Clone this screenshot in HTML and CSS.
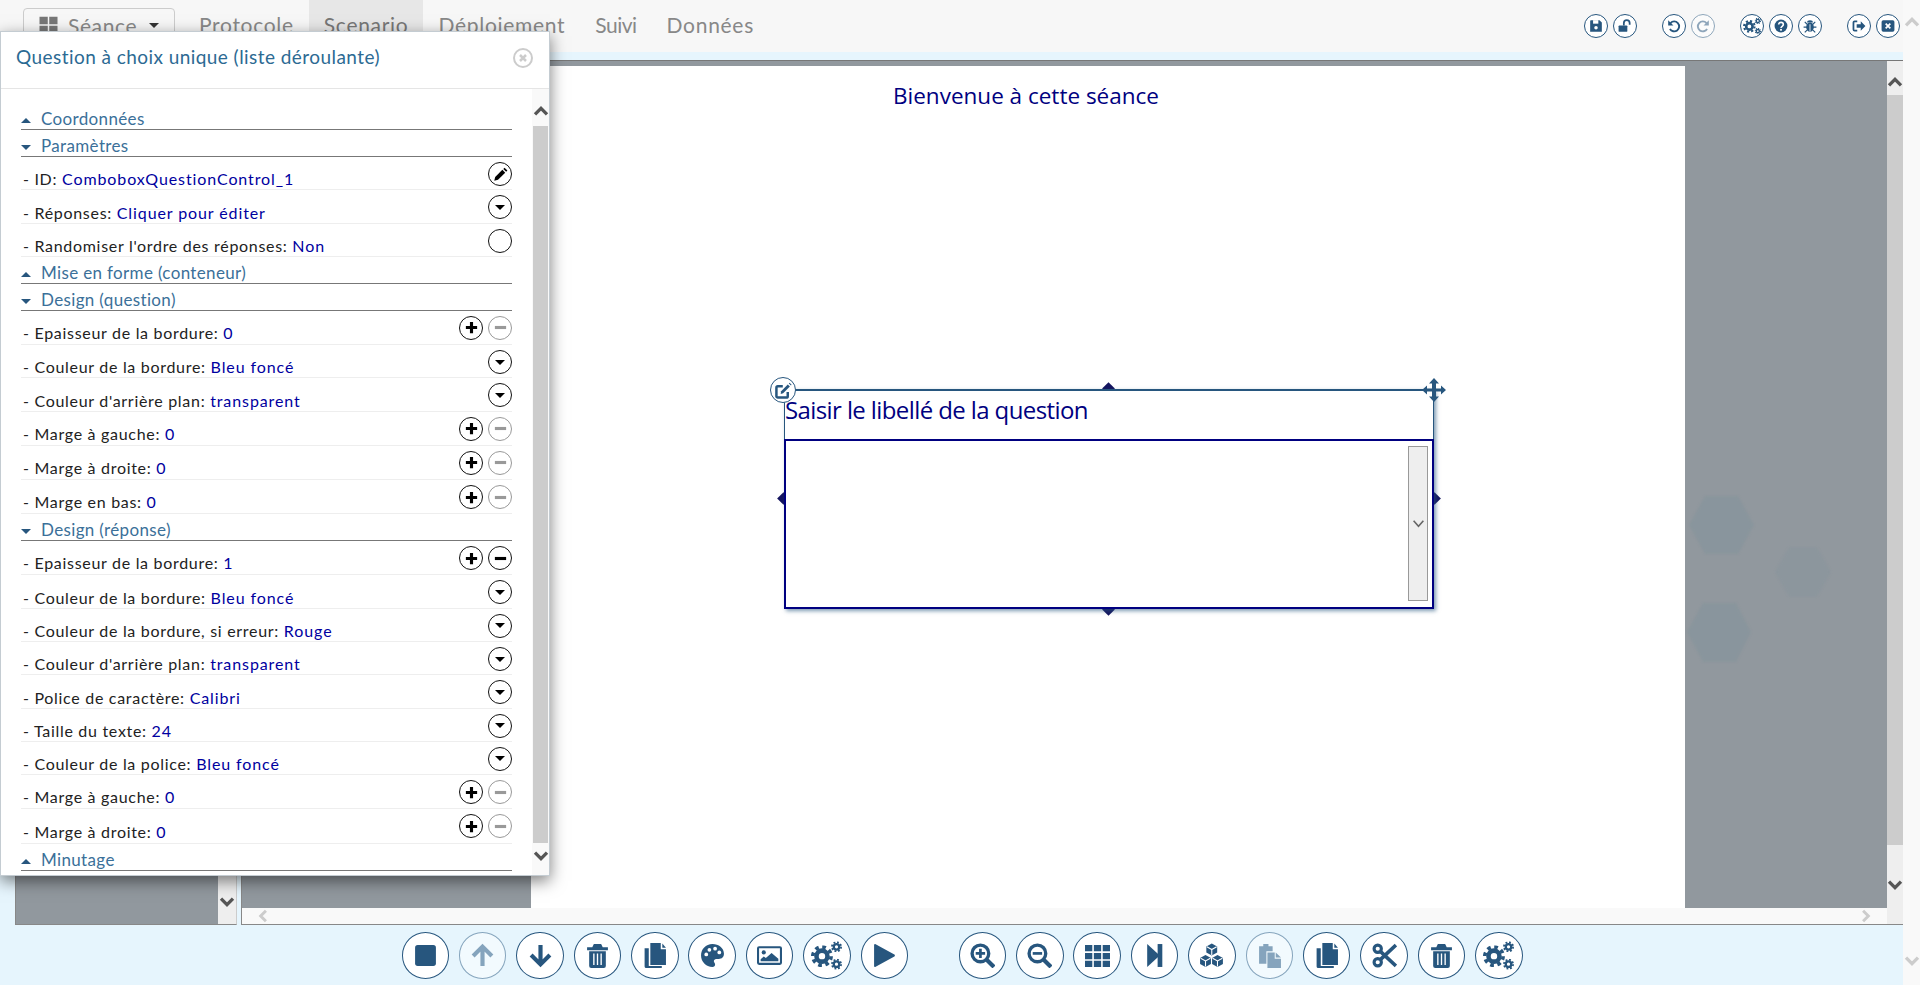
FILE: index.html
```html
<!DOCTYPE html>
<html lang="fr">
<head>
    <meta charset="UTF-8">
    <title>Scenario</title>
    <link rel="stylesheet" href="styles.css">
</head>
<body>
    <!-- icon set -->
    <svg class="icon-defs" xmlns="http://www.w3.org/2000/svg">
        <symbol id="gear" viewBox="0 0 24 24"><circle cx="12" cy="12" r="6" fill="none" stroke="currentColor" stroke-width="5"/><circle cx="12" cy="12" r="10" fill="none" stroke="currentColor" stroke-width="4" stroke-dasharray="4 3.85"/></symbol>
        <symbol id="i-cogs" viewBox="0 0 24 24"><use href="#gear" x="0" y="4" width="17" height="17"/><use href="#gear" x="15.500" y="1" width="8.500" height="8.500"/><use href="#gear" x="15.500" y="14.500" width="8.500" height="8.500"/></symbol>
        <symbol id="i-save" viewBox="0 0 24 24"><path d="M3 2h15l4 4v16H2V3z" fill="currentColor"/><rect x="7" y="2" width="9" height="6" fill="#fff"/><circle cx="12" cy="15" r="3" fill="#fff"/></symbol>
        <symbol id="i-unlock" viewBox="0 0 24 24"><rect x="1" y="11" width="15" height="11" rx="1.5" fill="currentColor"/><path d="M10 11V7a5 5 0 0 1 10 0v3" fill="none" stroke="currentColor" stroke-width="3"/></symbol>
        <symbol id="i-undo" viewBox="0 0 24 24"><path d="M6 7a8.5 8.5 0 1 1-1 10" fill="none" stroke="currentColor" stroke-width="3.2"/><path d="M2 2v9h9z" fill="currentColor"/></symbol>
        <symbol id="i-redo" viewBox="0 0 24 24"><path d="M18 7a8.5 8.5 0 1 0 1 10" fill="none" stroke="currentColor" stroke-width="3.2"/><path d="M22 2v9h-9z" fill="currentColor"/></symbol>
        <symbol id="i-help" viewBox="0 0 24 24"><circle cx="12" cy="12" r="11" fill="currentColor"/><path d="M8 9.5c0-5 8-5 8 0 0 3-4 3-4 6" fill="none" stroke="#fff" stroke-width="2.8"/><rect x="10.4" y="17" width="3.2" height="3" fill="#fff"/></symbol>
        <symbol id="i-bug" viewBox="0 0 24 24"><ellipse cx="12" cy="14" rx="6.5" ry="8" fill="currentColor"/><path d="M7 6a5 4 0 0 1 10 0z" fill="currentColor"/><path d="M12 8v14M3 5l4 4M21 5l-4 4M1 14h6M23 14h-6M3 23l4-4M21 23l-4-4" stroke="currentColor" stroke-width="2" fill="none"/><path d="M12 9v13" stroke="#fff" stroke-width="1.5"/></symbol>
        <symbol id="i-exit" viewBox="0 0 24 24"><path d="M9 4H4.500a2 2 0 0 0-2 2v12a2 2 0 0 0 2 2H9" fill="none" stroke="currentColor" stroke-width="3"/><path d="M8 9h7V4l8 8-8 8v-5H8z" fill="currentColor"/></symbol>
        <symbol id="i-closebox" viewBox="0 0 24 24"><rect x="1" y="2" width="22" height="20" rx="3" fill="currentColor"/><path d="M8 8l8 8M16 8l-8 8" stroke="#fff" stroke-width="3"/></symbol>
        <symbol id="i-grid4" viewBox="0 0 24 24"><path d="M0 1h11v10H0zM13 1h11v10H13zM0 13h11v10H0zM13 13h11v10H13z" fill="currentColor"/></symbol>
        <symbol id="i-stop" viewBox="0 0 24 24"><rect x="2" y="2" width="20" height="20" rx="2.500" fill="currentColor"/></symbol>
        <symbol id="i-up" viewBox="0 0 24 24"><path d="M12 22V4M3 12.500l9-9 9 9" fill="none" stroke="currentColor" stroke-width="4"/></symbol>
        <symbol id="i-down" viewBox="0 0 24 24"><path d="M12 2v18M3 11.500l9 9 9-9" fill="none" stroke="currentColor" stroke-width="4"/></symbol>
        <symbol id="i-trash" viewBox="0 0 24 24"><path d="M2 4h20v3H2zM7 4l1.500-3h7L17 4z" fill="currentColor"/><path d="M4 8h16v14a2 2 0 0 1-2 2H6a2 2 0 0 1-2-2z" fill="currentColor"/><path d="M8.500 10v11M12 10v11M15.500 10v11" stroke="#fff" stroke-width="1.300"/></symbol>
        <symbol id="i-files" viewBox="0 0 24 24"><path d="M8 0h10v6h5v15H8z" fill="currentColor"/><path d="M19.500 0.500L23 4.500h-3.500z" fill="currentColor"/><path d="M2.500 5H6.500v17H19v2H4a1.500 1.500 0 0 1-1.500-1.500z" fill="currentColor"/></symbol>
        <symbol id="i-palette" viewBox="0 0 24 24"><path d="M12 1C5.500 1 1 6 1 12s4.800 11 11 11c1.500 0 2.500-1 2.500-2.400 0-1.500-1.200-2-1.200-3.200 0-1.200 1-2.100 2.200-2.100H18c3 0 5-2 5-5C23 5 18 1 12 1z" fill="currentColor"/><circle cx="6" cy="11" r="1.800" fill="#fff"/><circle cx="9" cy="6.500" r="1.800" fill="#fff"/><circle cx="14.500" cy="5.500" r="1.800" fill="#fff"/><circle cx="18.500" cy="9" r="1.800" fill="#fff"/></symbol>
        <symbol id="i-image" viewBox="0 0 24 24"><rect x="1" y="4" width="22" height="16" rx="1" fill="none" stroke="currentColor" stroke-width="2"/><circle cx="6.500" cy="9" r="2" fill="currentColor"/><path d="M3.500 17.500v-2l3-2.500 2 1.500 5.500-5 6.500 5.500v2.500z" fill="currentColor"/></symbol>
        <symbol id="i-play" viewBox="0 0 24 24"><path d="M3 2l18 10-18 10z" fill="currentColor" stroke="currentColor" stroke-width="2" stroke-linejoin="round"/></symbol>
        <symbol id="i-zoomin" viewBox="0 0 24 24"><circle cx="10" cy="10" r="8" fill="none" stroke="currentColor" stroke-width="3.200"/><path d="M16 16l7 7" stroke="currentColor" stroke-width="4"/><path d="M10 5.500v9M5.500 10h9" stroke="currentColor" stroke-width="2.600"/></symbol>
        <symbol id="i-zoomout" viewBox="0 0 24 24"><circle cx="10" cy="10" r="8" fill="none" stroke="currentColor" stroke-width="3.200"/><path d="M16 16l7 7" stroke="currentColor" stroke-width="4"/><path d="M5.500 10h9" stroke="currentColor" stroke-width="2.600"/></symbol>
        <symbol id="i-th" viewBox="0 0 24 24"><path d="M0 2h7v6H0zM8.500 2h7v6h-7zM17 2h7v6h-7zM0 9.500h7v6H0zM8.500 9.500h7v6h-7zM17 9.500h7v6h-7zM0 17h7v6H0zM8.500 17h7v6h-7zM17 17h7v6h-7z" fill="currentColor"/></symbol>
        <symbol id="i-step" viewBox="0 0 24 24"><path d="M5 1l12 11L5 23z" fill="currentColor"/><rect x="15" y="1" width="4.500" height="22" fill="currentColor"/></symbol>
        <symbol id="cube" viewBox="0 0 24 24"><path d="M12 1l10 5.500v11L12 23 2 17.500v-11z" fill="currentColor"/><path d="M3 7l9 5 9-5M12 12v10" fill="none" stroke="#fff" stroke-width="2"/></symbol>
        <symbol id="i-cubes" viewBox="0 0 24 24"><use href="#cube" x="6" y="0" width="12.500" height="12.500"/><use href="#cube" x="0" y="11" width="12.500" height="12.500"/><use href="#cube" x="11.500" y="11" width="12.500" height="12.500"/></symbol>
        <symbol id="i-paste" viewBox="0 0 24 24"><path d="M2 3h4V1h5v2h4v5H9v12H2z" fill="currentColor"/><path d="M10 9h7v6h6v9H10z" fill="currentColor"/><path d="M18 9l5 5h-5z" fill="currentColor"/></symbol>
        <symbol id="i-scissors" viewBox="0 0 24 24"><circle cx="5.500" cy="5.500" r="3.500" fill="none" stroke="currentColor" stroke-width="3"/><circle cx="5.500" cy="18.500" r="3.500" fill="none" stroke="currentColor" stroke-width="3"/><path d="M8 8l15 14M8 16L23 2" stroke="currentColor" stroke-width="3.500"/></symbol>
        <symbol id="i-pencil" viewBox="0 0 24 24"><path d="M2 22l1.500-6L15 4.500l4.500 4.500L8 20.500z" fill="currentColor"/><path d="M16.500 3l2-2 4.500 4.500-2 2z" fill="currentColor"/></symbol>
        <symbol id="i-edit" viewBox="0 0 24 24"><path d="M18 14v6a2 2 0 0 1-2 2H4a2 2 0 0 1-2-2V8a2 2 0 0 1 2-2h7" fill="none" stroke="currentColor" stroke-width="3.500"/><path d="M8 17l.7-4L18 3.500l3 3L11.500 16z" fill="currentColor"/><path d="M19.500 2l1-1 3 3-1 1z" fill="currentColor"/></symbol>
        <symbol id="i-move" viewBox="0 0 24 24"><path d="M12 0l5 5.500h-3v5h5v-3l5 4.500-5 4.500v-3h-5v5h3L12 24l-5-5.500h3v-5H5v3L0 12l5-4.500v3h5v-5H7z" fill="currentColor"/></symbol>
        <symbol id="i-plus" viewBox="0 0 24 24"><path d="M12 3v18M3 12h18" stroke="currentColor" stroke-width="5"/></symbol>
        <symbol id="i-minus" viewBox="0 0 24 24"><path d="M3 12h18" stroke="currentColor" stroke-width="5"/></symbol>
        <symbol id="i-x" viewBox="0 0 24 24"><path d="M6 6l12 12M18 6L6 18" stroke="currentColor" stroke-width="5"/></symbol>
        <symbol id="chev-up" viewBox="0 0 24 24"><path d="M3 17l9-9 9 9" fill="none" stroke="currentColor" stroke-width="5"/></symbol>
        <symbol id="chev-down" viewBox="0 0 24 24"><path d="M3 7l9 9 9-9" fill="none" stroke="currentColor" stroke-width="5"/></symbol>
        <symbol id="chev-thin" viewBox="0 0 24 24"><path d="M3 7l9 10 9-10" fill="none" stroke="currentColor" stroke-width="3"/></symbol>
        <symbol id="chev-left" viewBox="0 0 24 24"><path d="M17 3l-9 9 9 9" fill="none" stroke="currentColor" stroke-width="5"/></symbol>
        <symbol id="chev-right" viewBox="0 0 24 24"><path d="M7 3l9 9-9 9" fill="none" stroke="currentColor" stroke-width="5"/></symbol>
    </svg>

    <div class="app">
        <div class="main">
            <nav class="navbar">
                <div class="session-btn">
                    <svg class="session-icon"><use href="#i-grid4"/></svg>
                    <span>Séance</span>
                    <i class="caret caret-down"></i>
                </div>
                <a class="tab">Protocole</a>
                <a class="tab tab-active">Scenario</a>
                <a class="tab">Déploiement</a>
                <a class="tab tab-tight">Suivi</a>
                <a class="tab">Données</a>
                <div class="nav-tools">
                    <div class="nav-group">
                        <span class="nav-btn"><svg><use href="#i-save"/></svg></span>
                        <span class="nav-btn"><svg><use href="#i-unlock"/></svg></span>
                    </div>
                    <div class="nav-group">
                        <span class="nav-btn"><svg><use href="#i-undo"/></svg></span>
                        <span class="nav-btn off"><svg><use href="#i-redo"/></svg></span>
                    </div>
                    <div class="nav-group">
                        <span class="nav-btn nav-btn-lg"><svg><use href="#i-cogs"/></svg></span>
                        <span class="nav-btn"><svg><use href="#i-help"/></svg></span>
                        <span class="nav-btn"><svg><use href="#i-bug"/></svg></span>
                    </div>
                    <div class="nav-group">
                        <span class="nav-btn"><svg><use href="#i-exit"/></svg></span>
                        <span class="nav-btn"><svg><use href="#i-closebox"/></svg></span>
                    </div>
                </div>
            </nav>
            <div class="strip"></div>

            <div class="workspace">
                <div class="side-panel">
                    <div class="side-fill"></div>
                    <div class="side-scroll"><svg class="chev chev-dark"><use href="#chev-down"/></svg></div>
                </div>
                <div class="view">
                    <div class="view-top">
                        <div class="stage">
                            <div class="sheet">
                                <h1 class="welcome">Bienvenue à cette séance</h1>
                                <div class="question">
                                    <div class="question-label">Saisir le libellé de la question</div>
                                    <div class="question-combo">
                                        <div class="combo-arrow"><svg class="chev-small"><use href="#chev-thin"/></svg></div>
                                    </div>
                                    <i class="handle handle-top"></i>
                                    <i class="handle handle-bottom"></i>
                                    <i class="handle handle-left"></i>
                                    <i class="handle handle-right"></i>
                                    <span class="edit-btn"><svg><use href="#i-edit"/></svg></span>
                                    <svg class="move-btn"><use href="#i-move"/></svg>
                                </div>
                            </div>
                            <svg class="hexes" viewBox="0 0 202 847">
                                <polygon points="4,464 20,435 53,435 69,464 53,493 20,493"/>
                                <polygon points="90,511 104,486 132,486 146,511 132,536 104,536" class="hex-faint"/>
                                <polygon points="2,571 18,542 51,542 66,571 51,601 18,601"/>
                            </svg>
                        </div>
                        <div class="v-scroll">
                            <svg class="chev chev-dark"><use href="#chev-up"/></svg>
                            <div class="v-thumb"></div>
                            <svg class="chev chev-dark"><use href="#chev-down"/></svg>
                        </div>
                    </div>
                    <div class="h-scroll">
                        <div class="h-track">
                            <svg class="chev chev-light"><use href="#chev-left"/></svg>
                            <svg class="chev chev-light"><use href="#chev-right"/></svg>
                        </div>
                        <div class="h-corner"></div>
                    </div>
                </div>
            </div>

            <div class="toolbar">
                <div class="tool-group">
                    <span class="tool"><svg><use href="#i-stop"/></svg></span>
                    <span class="tool off"><svg><use href="#i-up"/></svg></span>
                    <span class="tool"><svg><use href="#i-down"/></svg></span>
                    <span class="tool"><svg><use href="#i-trash"/></svg></span>
                    <span class="tool"><svg><use href="#i-files"/></svg></span>
                    <span class="tool"><svg><use href="#i-palette"/></svg></span>
                    <span class="tool"><svg><use href="#i-image"/></svg></span>
                    <span class="tool tool-lg"><svg><use href="#i-cogs"/></svg></span>
                    <span class="tool"><svg><use href="#i-play"/></svg></span>
                </div>
                <div class="tool-group">
                    <span class="tool"><svg><use href="#i-zoomin"/></svg></span>
                    <span class="tool"><svg><use href="#i-zoomout"/></svg></span>
                    <span class="tool"><svg><use href="#i-th"/></svg></span>
                    <span class="tool"><svg><use href="#i-step"/></svg></span>
                    <span class="tool"><svg><use href="#i-cubes"/></svg></span>
                    <span class="tool off"><svg><use href="#i-paste"/></svg></span>
                    <span class="tool"><svg><use href="#i-files"/></svg></span>
                    <span class="tool"><svg><use href="#i-scissors"/></svg></span>
                    <span class="tool"><svg><use href="#i-trash"/></svg></span>
                    <span class="tool tool-lg"><svg><use href="#i-cogs"/></svg></span>
                </div>
            </div>
        </div>

        <div class="page-scroll">
            <svg class="chev chev-light"><use href="#chev-up"/></svg>
            <svg class="chev chev-light"><use href="#chev-down"/></svg>
        </div>
    </div>

    <!-- properties dialog -->
    <div class="dialog">
        <div class="dialog-head">
            <span class="dialog-title">Question à choix unique (liste déroulante)</span>
            <span class="dialog-close"><svg><use href="#i-x"/></svg></span>
        </div>
        <div class="dialog-body">
            <div class="props">
                <div class="section"><i class="caret caret-up"></i>Coordonnées</div>
                <div class="section"><i class="caret caret-down"></i>Paramètres</div>
                <div class="row"><span>- ID: <em>ComboboxQuestionControl_1</em></span><span class="row-btns"><span class="rbtn"><svg><use href="#i-pencil"/></svg></span></span></div>
                <div class="row"><span>- Réponses: <em>Cliquer pour éditer</em></span><span class="row-btns"><span class="rbtn"><i class="caret caret-down"></i></span></span></div>
                <div class="row"><span>- Randomiser l'ordre des réponses: <em>Non</em></span><span class="row-btns"><span class="rbtn"></span></span></div>
                <div class="section"><i class="caret caret-up"></i>Mise en forme (conteneur)</div>
                <div class="section"><i class="caret caret-down"></i>Design (question)</div>
                <div class="row row-step"><span>- Epaisseur de la bordure: <em>0</em></span><span class="row-btns"><span class="rbtn"><svg><use href="#i-plus"/></svg></span><span class="rbtn off-grey"><svg><use href="#i-minus"/></svg></span></span></div>
                <div class="row"><span>- Couleur de la bordure: <em>Bleu foncé</em></span><span class="row-btns"><span class="rbtn"><i class="caret caret-down"></i></span></span></div>
                <div class="row"><span>- Couleur d'arrière plan: <em>transparent</em></span><span class="row-btns"><span class="rbtn"><i class="caret caret-down"></i></span></span></div>
                <div class="row row-step"><span>- Marge à gauche: <em>0</em></span><span class="row-btns"><span class="rbtn"><svg><use href="#i-plus"/></svg></span><span class="rbtn off-grey"><svg><use href="#i-minus"/></svg></span></span></div>
                <div class="row row-step"><span>- Marge à droite: <em>0</em></span><span class="row-btns"><span class="rbtn"><svg><use href="#i-plus"/></svg></span><span class="rbtn off-grey"><svg><use href="#i-minus"/></svg></span></span></div>
                <div class="row row-step"><span>- Marge en bas: <em>0</em></span><span class="row-btns"><span class="rbtn"><svg><use href="#i-plus"/></svg></span><span class="rbtn off-grey"><svg><use href="#i-minus"/></svg></span></span></div>
                <div class="section"><i class="caret caret-down"></i>Design (réponse)</div>
                <div class="row row-step"><span>- Epaisseur de la bordure: <em>1</em></span><span class="row-btns"><span class="rbtn"><svg><use href="#i-plus"/></svg></span><span class="rbtn"><svg><use href="#i-minus"/></svg></span></span></div>
                <div class="row"><span>- Couleur de la bordure: <em>Bleu foncé</em></span><span class="row-btns"><span class="rbtn"><i class="caret caret-down"></i></span></span></div>
                <div class="row"><span>- Couleur de la bordure, si erreur: <em>Rouge</em></span><span class="row-btns"><span class="rbtn"><i class="caret caret-down"></i></span></span></div>
                <div class="row"><span>- Couleur d'arrière plan: <em>transparent</em></span><span class="row-btns"><span class="rbtn"><i class="caret caret-down"></i></span></span></div>
                <div class="row"><span>- Police de caractère: <em>Calibri</em></span><span class="row-btns"><span class="rbtn"><i class="caret caret-down"></i></span></span></div>
                <div class="row"><span>- Taille du texte: <em>24</em></span><span class="row-btns"><span class="rbtn"><i class="caret caret-down"></i></span></span></div>
                <div class="row"><span>- Couleur de la police: <em>Bleu foncé</em></span><span class="row-btns"><span class="rbtn"><i class="caret caret-down"></i></span></span></div>
                <div class="row row-step"><span>- Marge à gauche: <em>0</em></span><span class="row-btns"><span class="rbtn"><svg><use href="#i-plus"/></svg></span><span class="rbtn off-grey"><svg><use href="#i-minus"/></svg></span></span></div>
                <div class="row row-step"><span>- Marge à droite: <em>0</em></span><span class="row-btns"><span class="rbtn"><svg><use href="#i-plus"/></svg></span><span class="rbtn off-grey"><svg><use href="#i-minus"/></svg></span></span></div>
                <div class="section"><i class="caret caret-up"></i>Minutage</div>
            </div>
            <div class="dialog-scroll">
                <svg class="chev chev-dark"><use href="#chev-up"/></svg>
                <div class="dialog-thumb"></div>
                <svg class="chev chev-dark"><use href="#chev-down"/></svg>
            </div>
        </div>
    </div>
</body>
</html>
```

FILE: styles.css
```css
* {
    box-sizing: border-box;
}
html, body {
    margin: 0;
    height: 100%;
    overflow: hidden;
}
body {
    font-family: Lato, "Open Sans", sans-serif;
    background-color: #f9f9f9;
    color: #222;
}
.icon-defs {
    position: absolute;
    width: 0;
    height: 0;
}
.app {
    display: flex;
    height: 985px;
}
.main {
    width: 1903px;
    display: flex;
    flex-direction: column;
}
.page-scroll {
    width: 17px;
    display: flex;
    flex-direction: column;
    justify-content: space-between;
    align-items: center;
    padding: 14px 0 16px;
}
.chev {
    width: 16px;
    height: 16px;
    display: block;
    flex-shrink: 0;
}
.chev-dark {
    color: #555;
}
.chev-light {
    color: #ccc;
}

/* top bar */
.navbar {
    height: 52px;
    display: flex;
    background-color: #f7f7f7;
    padding-left: 23px;
}
.session-btn {
    width: 152px;
    height: 34px;
    margin: 8px 9px 0 0;
    padding-left: 15px;
    display: flex;
    align-items: center;
    border: 1px solid #ccc;
    border-radius: 4px;
    color: #888;
    font-size: 21px;
    letter-spacing: 0.6px;
}
.session-icon {
    width: 19px;
    height: 18px;
    color: #777;
    margin-right: 10px;
}
.session-btn .caret {
    margin-left: 12px;
    border-top-color: #333;
}
.caret {
    display: inline-block;
    width: 0;
    height: 0;
    border-left: 5px solid transparent;
    border-right: 5px solid transparent;
}
.caret-down {
    border-top: 5px solid #27567e;
}
.caret-up {
    border-bottom: 5px solid #27567e;
}
.tab {
    padding: 0 15px;
    line-height: 50px;
    font-size: 21px;
    letter-spacing: 0.7px;
    color: #888;
}
.tab-active {
    background-color: #e7e7e7;
    color: #777;
}
.tab-tight {
    letter-spacing: -0.5px;
}
.nav-tools {
    margin-left: auto;
    padding: 14px 3px 0 0;
    display: flex;
    gap: 25px;
}
.nav-group {
    display: flex;
    gap: 5px;
}
.nav-btn {
    width: 24px;
    height: 24px;
    border: 1px solid #27567e;
    border-radius: 50%;
    background-color: #fff;
    color: #27567e;
    display: flex;
    align-items: center;
    justify-content: center;
}
.nav-btn svg {
    width: 14px;
    height: 14px;
}
.nav-btn-lg svg {
    width: 18px;
    height: 18px;
}
.off {
    opacity: 0.5;
}
.strip {
    height: 9px;
    background-color: #e6f5fd;
    border-bottom: 1px solid #777;
}

/* canvas area */
.workspace {
    height: 864px;
    display: flex;
    gap: 4px;
    padding-left: 15px;
    background-color: #e6f5fd;
}
.side-panel {
    width: 222px;
    display: flex;
    border-left: 1px solid #888;
    border-bottom: 1px solid #888;
    border-right: 1px solid #ccc;
}
.side-fill {
    flex: 1;
    background-color: #91989e;
}
.side-scroll {
    width: 18px;
    background-color: #eee;
    display: flex;
    align-items: flex-end;
    justify-content: center;
    padding-bottom: 14px;
}
.view {
    flex: 1;
    display: flex;
    flex-direction: column;
    border-left: 1px solid #888;
    border-bottom: 1px solid #888;
}
.view-top {
    height: 847px;
    display: flex;
}
.stage {
    flex: 1;
    position: relative;
    background-color: #91989e;
    padding: 5px 0 0 289px;
    overflow: hidden;
}
.sheet {
    position: relative;
    z-index: 0;
    width: 1154px;
    height: 100%;
    background-color: #fff;
}
.welcome {
    margin: 0;
    padding-top: 15px;
    font-family: "Open Sans", sans-serif;
    font-weight: 400;
    font-size: 22.5px;
    line-height: 30px;
    color: #000080;
    text-align: center;
    width: 990px;
}
.hexes {
    position: absolute;
    right: 0;
    top: 0;
    width: 202px;
    height: 847px;
    fill: rgba(120, 145, 155, 0.28);
    filter: blur(1px);
}
.hex-faint {
    fill: rgba(120, 145, 155, 0.16);
}
.v-scroll {
    width: 16px;
    display: flex;
    flex-direction: column;
    align-items: center;
    background-color: #eee;
    padding-top: 13px;
}
.v-thumb {
    width: 100%;
    height: 750px;
    background-color: #ccc;
    margin: 5px 0 32px;
}
.h-scroll {
    height: 16px;
    display: flex;
}
.h-track {
    flex: 1;
    display: flex;
    justify-content: space-between;
    align-items: center;
    background-color: #f9f9f9;
    padding: 0 14px;
}
.h-track .chev {
    width: 14px;
    height: 14px;
}
.h-corner {
    width: 16px;
    background-color: #eee;
}

/* question widget on the sheet */
.question {
    position: absolute;
    left: 253px;
    top: 323px;
    width: 650px;
    height: 220px;
    background-color: #fff;
    border-top: 2px solid #27567e;
    box-shadow: 2px 2px 4px rgba(39, 86, 126, 0.6);
}
.question-label {
    height: 48px;
    padding-left: 0;
    font-family: "Open Sans", sans-serif;
    font-size: 24px;
    letter-spacing: -0.6px;
    line-height: 37px;
    color: #000080;
    border-left: 1px solid #27567e;
    border-right: 1px solid #27567e;
}
.question-combo {
    height: 170px;
    position: relative;
    border: 2px solid #000080;
}
.combo-arrow {
    position: absolute;
    right: 4px;
    top: 5px;
    width: 20px;
    height: 155px;
    background-color: #eee;
    border: 1px solid #999;
    display: flex;
    align-items: center;
    justify-content: center;
}
.chev-small {
    width: 13px;
    height: 13px;
    color: #666;
}
.handle {
    position: absolute;
    width: 9px;
    height: 9px;
    background-color: #14145f;
    transform: rotate(45deg);
    z-index: -1;
}
.handle-top {
    top: -7px;
    left: 320px;
}
.handle-bottom {
    bottom: -5px;
    left: 320px;
}
.handle-left {
    top: 103px;
    left: -5px;
}
.handle-right {
    top: 103px;
    right: -5px;
}
.edit-btn {
    position: absolute;
    left: -14px;
    top: -14px;
    width: 26px;
    height: 26px;
    border: 1px solid #27567e;
    border-radius: 50%;
    background-color: #fff;
    color: #27567e;
    display: flex;
    align-items: center;
    justify-content: center;
}
.edit-btn svg {
    width: 17px;
    height: 17px;
}
.move-btn {
    position: absolute;
    right: -12px;
    top: -13px;
    width: 24px;
    height: 24px;
    color: #27567e;
}

/* bottom toolbar */
.toolbar {
    flex: 1;
    display: flex;
    gap: 50.5px;
    padding: 7px 0 0 401.5px;
    background-color: #e6f5fd;
}
.tool-group {
    display: flex;
    gap: 9.9px;
}
.tool {
    width: 47.5px;
    height: 47px;
    border: 1px solid #27567e;
    border-radius: 50%;
    background-color: #fff;
    color: #27567e;
    display: flex;
    align-items: center;
    justify-content: center;
}
.tool svg {
    width: 25px;
    height: 25px;
}
.tool-lg svg {
    width: 31px;
    height: 31px;
}

/* properties dialog */
.dialog {
    position: absolute;
    left: 0;
    top: 31px;
    width: 550px;
    height: 845px;
    background-color: #fff;
    border: 1px solid #c4ccd2;
    box-shadow: 0 5px 15px rgba(0, 0, 0, 0.5);
    display: flex;
    flex-direction: column;
    z-index: 5;
}
.dialog-head {
    height: 57px;
    padding: 0 16px 0 15px;
    display: flex;
    justify-content: space-between;
    border-bottom: 1px solid #e5e5e5;
}
.dialog-title {
    font-size: 19px;
    letter-spacing: 0.44px;
    line-height: 50px;
    color: #2c6a93;
}
.dialog-close {
    width: 20px;
    height: 20px;
    margin: 16px 0 0;
    border: 2px solid #ccc;
    border-radius: 50%;
    color: #ccc;
    display: flex;
    align-items: center;
    justify-content: center;
}
.dialog-close svg {
    width: 12px;
    height: 12px;
}
.dialog-body {
    flex: 1;
    display: flex;
    min-height: 0;
}
.props {
    flex: 1;
    padding: 14px 20px 0;
    overflow: hidden;
}
.section {
    height: 27px;
    border-bottom: 1px solid #777;
    font-size: 17px;
    letter-spacing: 0.35px;
    line-height: 32px;
    color: #3b7099;
    white-space: nowrap;
    overflow: hidden;
}
.section .caret {
    vertical-align: 2px;
    margin-right: 10px;
}
.row {
    height: 33.3px;
    padding-left: 2px;
    display: flex;
    justify-content: space-between;
    align-items: flex-end;
    border-bottom: 1px solid #eee;
    font-size: 16px;
    letter-spacing: 0.7px;
    line-height: 20px;
    color: #222;
    white-space: nowrap;
}
.row-step {
    height: 34.2px;
    padding-bottom: 1px;
}
.row em {
    font-style: normal;
    color: #0000a0;
    letter-spacing: 0.9px;
}
.row-btns {
    display: flex;
    gap: 5px;
    align-self: flex-start;
    margin-top: 5px;
}
.rbtn {
    width: 24px;
    height: 24px;
    border: 1.5px solid #111;
    border-radius: 50%;
    background-color: #fff;
    color: #000;
    display: flex;
    align-items: center;
    justify-content: center;
}
.rbtn svg {
    width: 15px;
    height: 15px;
}
.rbtn .caret-down {
    border-top-color: #000;
}
.off-grey {
    border-color: #999;
    color: #999;
}
.dialog-scroll {
    width: 17px;
    display: flex;
    flex-direction: column;
    align-items: center;
    background-color: #f9f9f9;
    padding-top: 14px;
}
.dialog-thumb {
    width: 15px;
    height: 717px;
    flex-shrink: 0;
    margin: 7px 0 5px;
    background-color: #ccc;
}
```
